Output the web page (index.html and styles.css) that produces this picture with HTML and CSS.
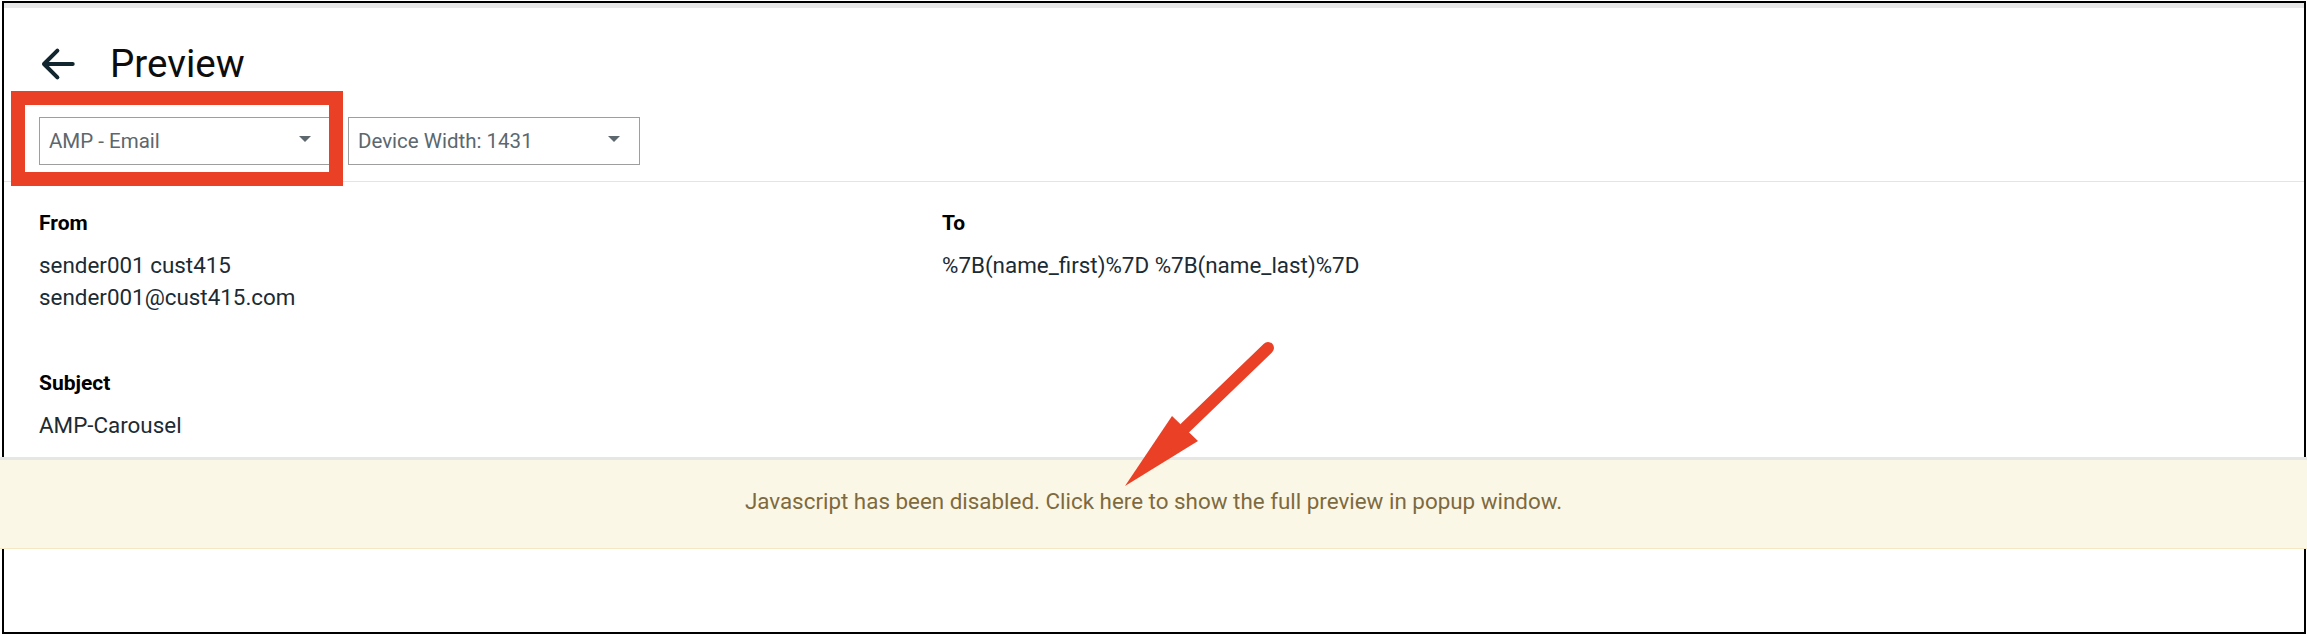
FILE: index.html
```html
<!DOCTYPE html>
<html lang="en">
<head>
<meta charset="utf-8">
<title>Preview</title>
<link rel="stylesheet" href="styles.css">
</head>
<body>
<div class="frame">
  <div class="topbar"></div>
  <header class="header">
    <svg class="back-icon" viewBox="0 0 24 24" aria-hidden="true">
      <path d="M20.2 12H5.6M12.2 5L5.2 12L12.2 19" fill="none" stroke="currentColor" stroke-width="2.1" stroke-linecap="round" stroke-linejoin="round"/>
    </svg>
    <h1 class="title">Preview</h1>
  </header>
  <div class="toolbar">
    <div class="select">
      <span class="select-text">AMP - Email</span>
      <svg class="caret" viewBox="0 0 12 6" aria-hidden="true"><polygon points="0,0 12,0 6,6" fill="currentColor"/></svg>
    </div>
    <div class="select">
      <span class="select-text">Device Width: 1431</span>
      <svg class="caret" viewBox="0 0 12 6" aria-hidden="true"><polygon points="0,0 12,0 6,6" fill="currentColor"/></svg>
    </div>
  </div>
  <hr class="divider">
  <section class="meta">
    <div class="field">
      <div class="label">From</div>
      <div class="value">sender001 cust415<br>sender001@cust415.com</div>
    </div>
    <div class="field">
      <div class="label">To</div>
      <div class="value">%7B(name_first)%7D %7B(name_last)%7D</div>
    </div>
    <div class="field">
      <div class="label">Subject</div>
      <div class="value">AMP-Carousel</div>
    </div>
  </section>
  <div class="banner">Javascript has been disabled. Click here to show the full preview in popup window.</div>

  <div class="annot-box"></div>
  <svg class="annot-arrow" viewBox="0 0 175 160" aria-hidden="true">
    <line x1="158" y1="13" x2="75" y2="93" stroke="#ea4026" stroke-width="12" stroke-linecap="round"/>
    <polygon points="15,151 62,81 88,106" fill="#ea4026"/>
  </svg>
</div>
</body>
</html>
```

FILE: styles.css
```css
html, body {
  margin: 0;
  padding: 0;
  background: #ffffff;
}

body {
  font-family: Roboto, "Liberation Sans", Arial, sans-serif;
}

.frame {
  position: relative;
  box-sizing: border-box;
  width: 2304px;
  height: 633px;
  margin: 1px 0 0 2px;
  border: 2px solid #000000;
}

.topbar {
  height: 5px;
  background: #e8e8e8;
}

.header {
  display: flex;
  align-items: center;
  height: 46px;
  margin-top: 33px;
  padding-left: 30px;
  gap: 30px;
}

.back-icon {
  width: 46px;
  height: 46px;
  color: #11262e;
  flex: none;
}

.title {
  margin: 0;
  font-size: 38.6px;
  font-weight: 400;
  line-height: 46px;
  color: #0d0d0d;
}

.toolbar {
  display: flex;
  gap: 17px;
  margin-top: 30px;
  padding-left: 35px;
}

.select {
  box-sizing: border-box;
  width: 292px;
  height: 48px;
  border: 1px solid #9e9e9e;
  display: flex;
  align-items: center;
  justify-content: space-between;
  padding: 0 19px 0 9px;
  font-size: 20.5px;
  color: #5c676e;
}

.caret {
  width: 12px;
  height: 6px;
  margin-bottom: 5px;
  color: #5c676e;
}

.divider {
  margin: 16px 0 0;
  border: 0;
  border-top: 1px solid #e4e4e4;
  height: 0;
}

.meta {
  display: grid;
  grid-template-columns: 903px 1fr;
  row-gap: 56px;
  padding: 27px 0 0 35px;
}

.label {
  font-size: 21px;
  font-weight: 700;
  line-height: 28px;
  color: #000000;
}

.value {
  margin-top: 12px;
  font-size: 22.4px;
  line-height: 32px;
  color: #1c2b33;
}

.banner {
  margin: 16px -3px 0 -4px;
  border-top: 3px solid #e6e7e5;
  border-bottom: 1px solid #f4e7c3;
  background: #fbf7e6;
  padding: 27px 0 33px;
  text-align: center;
  font-size: 22.4px;
  line-height: 28px;
  color: #7e6a3e;
}

.annot-box {
  position: absolute;
  left: 7px;
  top: 88px;
  width: 332px;
  height: 95px;
  box-sizing: border-box;
  border: 14px solid #ea4026;
}

.annot-arrow {
  position: absolute;
  left: 1106px;
  top: 332px;
  width: 175px;
  height: 160px;
}
```
